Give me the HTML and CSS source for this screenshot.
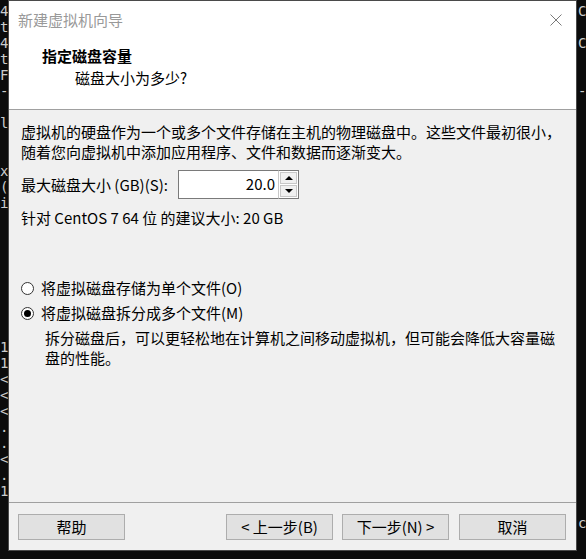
FILE: index.html
```html
<!DOCTYPE html>
<html lang="zh-CN">
<head>
<meta charset="utf-8">
<title>新建虚拟机向导</title>
<link rel="stylesheet" href="styles.css">
</head>
<body>
<div class="desktop">
  <div class="terminal">
    <div class="ln"><span class="l">4</span><span class="r">CO</span></div>
    <div class="ln"><span class="l">t</span><span class="r"></span></div>
    <div class="ln"><span class="l">4</span><span class="r">CO</span></div>
    <div class="ln"><span class="l">t</span><span class="r"></span></div>
    <div class="ln"><span class="l">F</span><span class="r"></span></div>
    <div class="ln"><span class="l">--</span><span class="r">--</span></div>
    <div class="ln"><span class="l"></span><span class="r"></span></div>
    <div class="ln"><span class="l">l</span><span class="r"></span></div>
    <div class="ln"><span class="l"></span><span class="r"></span></div>
    <div class="ln"><span class="l"></span><span class="r"></span></div>
    <div class="ln"><span class="l">x</span><span class="r"></span></div>
    <div class="ln"><span class="l">(</span><span class="r"></span></div>
    <div class="ln"><span class="l">i</span><span class="r"></span></div>
    <div class="ln"><span class="l"></span><span class="r"></span></div>
    <div class="ln"><span class="l"></span><span class="r"></span></div>
    <div class="ln"><span class="l"></span><span class="r"></span></div>
    <div class="ln"><span class="l"></span><span class="r"></span></div>
    <div class="ln"><span class="l"></span><span class="r"></span></div>
    <div class="ln"><span class="l"></span><span class="r"></span></div>
    <div class="ln"><span class="l"></span><span class="r"></span></div>
    <div class="ln"><span class="l"></span><span class="r"></span></div>
    <div class="ln"><span class="l">1</span><span class="r"></span></div>
    <div class="ln"><span class="l">1</span><span class="r"></span></div>
    <div class="ln"><span class="l">&lt;</span><span class="r"></span></div>
    <div class="ln"><span class="l">&lt;</span><span class="r"></span></div>
    <div class="ln"><span class="l">&lt;</span><span class="r"></span></div>
    <div class="ln"><span class="l">.</span><span class="r"></span></div>
    <div class="ln"><span class="l">.</span><span class="r"></span></div>
    <div class="ln"><span class="l">&lt;</span><span class="r"></span></div>
    <div class="ln"><span class="l">.</span><span class="r"></span></div>
    <div class="ln"><span class="l">1</span><span class="r"></span></div>
    <div class="ln"><span class="l"></span><span class="r"></span></div>
    <div class="ln"><span class="l"></span><span class="r">cg</span></div>
  </div>

  <div class="dialog">
    <div class="titlebar">
      <span class="title">新建虚拟机向导</span>
      <svg class="close" width="12" height="12" viewBox="0 0 12 12"><path d="M0.5 0.5 L11.5 11.5 M11.5 0.5 L0.5 11.5" stroke="#7a7a7a" stroke-width="1" fill="none"/></svg>
    </div>
    <div class="header">
      <div class="h-title">指定磁盘容量</div>
      <div class="h-sub">磁盘大小为多少?</div>
    </div>
    <div class="body">
      <p class="desc">虚拟机的硬盘作为一个或多个文件存储在主机的物理磁盘中。这些文件最初很小，随着您向虚拟机中添加应用程序、文件和数据而逐渐变大。</p>
      <div class="size-row">
        <label class="size-label">最大磁盘大小 (GB)(S):</label>
        <div class="spin">
          <div class="spin-input">20.0</div>
          <div class="spin-btns">
            <div class="spin-btn"><span class="tri-up"></span></div>
            <div class="spin-btn"><span class="tri-down"></span></div>
          </div>
        </div>
      </div>
      <div class="recommend">针对 CentOS 7 64 位 的建议大小: 20 GB</div>
      <div class="radios">
        <div class="radio-row"><span class="radio"></span><span>将虚拟磁盘存储为单个文件(O)</span></div>
        <div class="radio-row"><span class="radio checked"></span><span>将虚拟磁盘拆分成多个文件(M)</span></div>
        <p class="radio-desc">拆分磁盘后，可以更轻松地在计算机之间移动虚拟机，但可能会降低大容量磁盘的性能。</p>
      </div>
    </div>
    <div class="footer">
      <button class="btn btn-help">帮助</button>
      <div class="nav">
        <button class="btn">&lt; 上一步(B)</button>
        <button class="btn">下一步(N) &gt;</button>
        <button class="btn btn-cancel">取消</button>
      </div>
    </div>
  </div>
</div>
</body>
</html>
```

FILE: styles.css
```css
html, body {
  margin: 0;
  padding: 0;
  background: #0c0c0c;
}

.desktop {
  position: relative;
  width: 586px;
  height: 559px;
  overflow: hidden;
  background: #0c0c0c;
}

.terminal {
  padding-top: 3px;
  font-family: "DejaVu Sans Mono", "Liberation Mono", monospace;
  font-size: 14px;
  line-height: 16px;
  color: #cccccc;
}

.ln {
  display: grid;
  grid-template-columns: 578px 1fr;
  height: 16px;
  white-space: pre;
}

.dialog {
  position: absolute;
  left: 8px;
  top: 0;
  width: 569px;
  height: 551px;
  box-sizing: border-box;
  border: 1px solid #4a4a4a;
  background: #f0f0f0;
  display: flex;
  flex-direction: column;
  font-family: "Noto Sans CJK SC", "Noto Sans", sans-serif;
  font-size: 15px;
  color: #000;
}

.titlebar {
  height: 37px;
  background: #fff;
  display: flex;
  align-items: center;
  justify-content: space-between;
  padding: 0 14px 0 9px;
}

.title {
  color: #999999;
  line-height: 20px;
  margin-top: 1px;
}

.close {
  display: block;
  margin-top: 1px;
}

.header {
  height: 72px;
  box-sizing: border-box;
  background: #fff;
  border-bottom: 1px solid #a0a0a0;
  padding-top: 8px;
}

.h-title {
  font-weight: bold;
  line-height: 20px;
  padding-left: 33px;
}

.h-sub {
  line-height: 20px;
  padding-left: 66px;
  margin-top: 2px;
}

.body {
  flex: 1;
  padding: 12px 6px 0 12px;
  border-bottom: 1px solid #a0a0a0;
}

.desc {
  margin: 0;
  line-height: 20px;
}

.size-row {
  display: flex;
  align-items: center;
  margin-top: 8px;
  height: 29px;
}

.size-label {
  line-height: 20px;
  width: 157px;
}

.spin {
  display: flex;
  height: 29px;
}

.spin-input {
  width: 100px;
  height: 29px;
  box-sizing: border-box;
  border: 1px solid #7a7a7a;
  border-right: none;
  background: #fff;
  text-align: right;
  line-height: 26px;
  padding-right: 3px;
}

.spin-btns {
  width: 21px;
  height: 29px;
  box-sizing: border-box;
  border: 1px solid #7a7a7a;
  border-left: 1px solid #c8c8c8;
  background: #fff;
  display: flex;
  flex-direction: column;
  padding: 1px;
  gap: 1px;
}

.spin-btn {
  flex: 1;
  background: #f0f0f0;
  border: 1px solid #c8c8c8;
  display: flex;
  align-items: center;
  justify-content: center;
}

.tri-up {
  width: 0;
  height: 0;
  border-left: 4px solid transparent;
  border-right: 4px solid transparent;
  border-bottom: 4px solid #000;
}

.tri-down {
  width: 0;
  height: 0;
  border-left: 4px solid transparent;
  border-right: 4px solid transparent;
  border-top: 4px solid #000;
}

.recommend {
  margin-top: 9px;
  line-height: 20px;
}

.radios {
  margin-top: 50px;
}

.radio-row {
  display: flex;
  align-items: center;
  line-height: 20px;
  gap: 7px;
  margin-bottom: 5px;
}

.radio {
  width: 13px;
  height: 13px;
  box-sizing: border-box;
  border: 1px solid #333;
  border-radius: 50%;
  background: #fff;
  position: relative;
  flex: none;
}

.radio.checked::after {
  content: "";
  position: absolute;
  left: 2px;
  top: 2px;
  width: 7px;
  height: 7px;
  border-radius: 50%;
  background: #000;
}

.radio-desc {
  margin: 1px 0 0 24px;
  line-height: 20px;
  width: 520px;
}

.footer {
  height: 47px;
  box-sizing: border-box;
  padding: 11px 10px 0 9px;
  display: flex;
  justify-content: space-between;
}

.nav {
  display: flex;
  gap: 9px;
}

.btn {
  height: 26px;
  width: 107px;
  box-sizing: border-box;
  background: #e1e1e1;
  border: 1px solid #adadad;
  font-family: "Noto Sans CJK SC", "Noto Sans", sans-serif;
  font-size: 15px;
  line-height: 22px;
  padding: 0;
  color: #000;
}

.btn-cancel {
  margin-left: 1px;
}
```
